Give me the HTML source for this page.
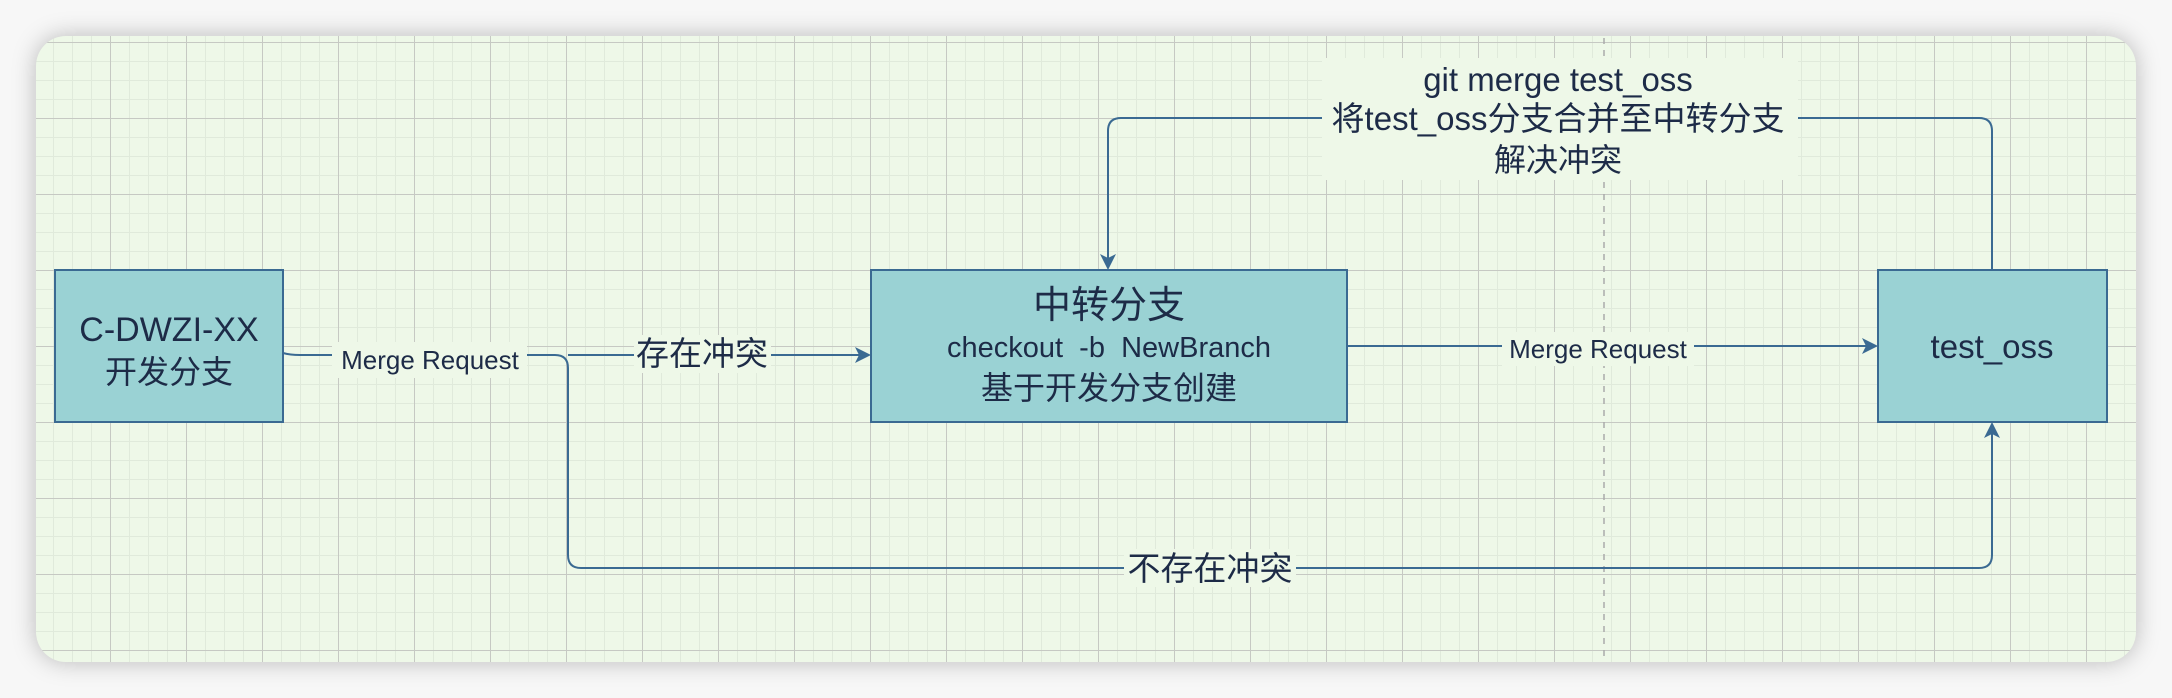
<!DOCTYPE html>
<html><head><meta charset="utf-8"><style>
html,body{margin:0;padding:0;width:2172px;height:698px;background:#f7f7f7;overflow:hidden}
.card{position:absolute;left:36px;top:36px;width:2100px;height:626px;border-radius:30px;overflow:hidden;
background-color:#eef8e8;
background-image:
linear-gradient(to right,#c6c9c3 1px,transparent 1px),
linear-gradient(to bottom,#c6c9c3 1px,transparent 1px),
linear-gradient(to right,#e0eadb 1px,transparent 1px),
linear-gradient(to bottom,#e0eadb 1px,transparent 1px);
background-size:76px 76px,76px 76px,19px 19px,19px 19px;
background-position:-2px 6px,-2px 6px,-2px 6px,-2px 6px;
box-shadow:0 0 24px rgba(0,0,0,0.25)}
svg{position:absolute;left:0;top:0}
text{font-family:"Liberation Sans","Noto Sans CJK SC",sans-serif;fill:#1d2b47;text-anchor:middle;white-space:pre}
</style></head><body>
<div class="card"></div>
<svg width="2172" height="698" viewBox="0 0 2172 698">
<line x1="1604" y1="38" x2="1604" y2="660" stroke="#aaa" stroke-width="1.5" stroke-dasharray="6,6"/>
<g fill="#9ad2d4" stroke="#3a6a92" stroke-width="2">
<rect x="55" y="270" width="228" height="152"/>
<rect x="871" y="270" width="476" height="152"/>
<rect x="1878" y="270" width="229" height="152"/>
</g>
<g fill="none" stroke="#3a6a92" stroke-width="2">
<path d="M283 353 Q290 355 300 355 L555 355 Q568 355 568 368 L568 555 Q568 568 581 568 L1979 568 Q1992 568 1992 555 L1992 432"/>
<path d="M568 355 L860 355"/>
<path d="M1347 346 L1866 346"/>
<path d="M1992 270 L1992 131 Q1992 118 1979 118 L1121 118 Q1108 118 1108 131 L1108 258"/>
</g>
<g fill="#3a6a92">
<path d="M871 355 L855 347 L859 355 L855 363Z"/>
<path d="M1878 346 L1862 338 L1866 346 L1862 354Z"/>
<path d="M1992 422 L1984 438 L1992 434 L2000 438Z"/>
<path d="M1108 270 L1100 254 L1108 258 L1116 254Z"/>
</g>
<rect x="332" y="342" width="195" height="36" fill="#eef8e8"/>
<rect x="634" y="335" width="137" height="38" fill="#eef8e8"/>
<rect x="1502" y="332" width="192" height="34" fill="#eef8e8"/>
<rect x="1124" y="549" width="172" height="38" fill="#eef8e8"/>
<rect x="1322" y="58" width="476" height="122" fill="#eef8e8"/>
<text x="169" y="341" font-size="34">C-DWZI-XX</text>
<text x="169" y="383" font-size="32">开发分支</text>
<text x="1109" y="318" font-size="38">中转分支</text>
<text x="1109" y="357" font-size="29">checkout  -b  NewBranch</text>
<text x="1109" y="399" font-size="32">基于开发分支创建</text>
<text x="1992" y="358" font-size="33">test_oss</text>
<text x="430" y="369" font-size="26">Merge Request</text>
<text x="702" y="365" font-size="33">存在冲突</text>
<text x="1598" y="358" font-size="26">Merge Request</text>
<text x="1210" y="580" font-size="33">不存在冲突</text>
<text x="1558" y="91" font-size="33">git merge test_oss</text>
<text x="1558" y="130" font-size="33">将test_oss分支合并至中转分支</text>
<text x="1558" y="171" font-size="32">解决冲突</text>
</svg>
</body></html>
